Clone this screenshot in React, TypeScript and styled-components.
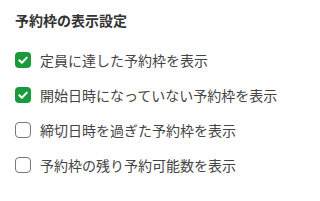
import React from 'react'
import styled, { createGlobalStyle } from 'styled-components'

const GlobalStyle = createGlobalStyle`
  body {
    margin: 0;
    background: #fff;
    font-family: "Noto Sans CJK JP", "Noto Sans", sans-serif;
  }
`

const options = [
  { label: '定員に達した予約枠を表示', checked: true },
  { label: '開始日時になっていない予約枠を表示', checked: true },
  { label: '締切日時を過ぎた予約枠を表示', checked: false },
  { label: '予約枠の残り予約可能数を表示', checked: false },
]

const App = () => {
  return (
    <Container>
      <GlobalStyle />
      <Title>予約枠の表示設定</Title>
      <List>
        {options.map((o) => (
          <Row key={o.label}>
            <Box checked={o.checked}>
              {o.checked && (
                <svg width="12" height="12" viewBox="0 0 12 12">
                  <path d="M2.3 6.2 L4.9 8.7 L9.8 3.6" fill="none" stroke="#fff" strokeWidth="2" strokeLinecap="round" strokeLinejoin="round" />
                </svg>
              )}
            </Box>
            <Label>{o.label}</Label>
          </Row>
        ))}
      </List>
    </Container>
  )
}

export default App

const Container = styled.div`
  width: 320px;
  height: 201px;
  padding: 10px 16px 0 15px;
  box-sizing: border-box;
`
const Title = styled.div`
  font-size: 14px;
  font-weight: 700;
  color: #333;
  line-height: 20px;
`
const List = styled.div`
  display: flex;
  flex-direction: column;
  gap: 15px;
  margin-top: 20px;
`
const Row = styled.label`
  display: flex;
  align-items: center;
  gap: 9px;
  height: 20px;
`
const Box = styled.span<{ checked: boolean }>`
  width: 16px;
  height: 16px;
  box-sizing: border-box;
  border-radius: 4px;
  display: flex;
  align-items: center;
  justify-content: center;
  background: ${(p) => (p.checked ? '#1a9a3c' : '#fff')};
  border: ${(p) => (p.checked ? 'none' : '1px solid #777')};
`
const Label = styled.span`
  font-size: 14px;
  color: #444;
`
